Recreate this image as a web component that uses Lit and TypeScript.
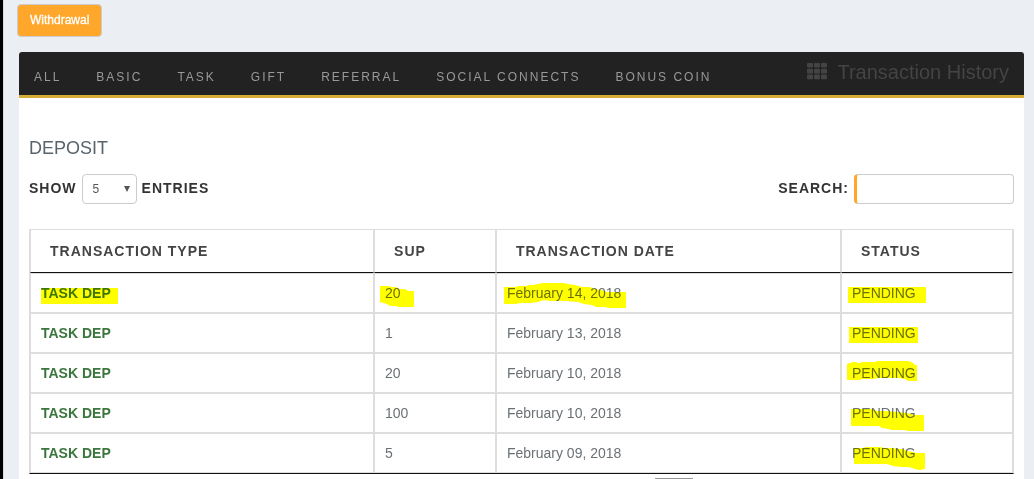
import { LitElement, html, css, nothing } from "lit";
import { customElement } from "lit/decorators.js";

interface Mark {
  type?: string;
  sup?: string;
  date?: string;
  status?: string;
}
interface Row {
  type: string;
  sup: string;
  date: string;
  status: string;
  marks: Mark;
}

// Marker strokes, drawn in the pixel space of a data cell (origin at its top left corner).
const rows: Row[] = [
  {
    type: "TASK DEP", sup: "20", date: "February 14, 2018", status: "PENDING",
    marks: {
      type: "M11 14H88V30H11Z",
      sup: "M6 12H15L17 13H22L25 15H31L34 17H40V33H24L22 32H16L13 30L9 29L6 28Z",
      date: "M8 13H20L22 12H30L33 11H38L41 10L47 9H68L72 10L79 11L86 13H94L98 15L106 16L110 18H130V34H114L108 33H100L96 31L88 30L82 28L70 27H54L48 26L42 28L34 29H24L20 30H8Z",
      status: "M7 13H85V29H7Z",
    },
  },
  { type: "TASK DEP", sup: "1", date: "February 13, 2018", status: "PENDING", marks: { status: "M8 13H77V29H8Z" } },
  { type: "TASK DEP", sup: "20", date: "February 10, 2018", status: "PENDING", marks: { status: "M6 10L8 9H11V8H16V9H20V8H35V7H68L72 9L74 11H76V27H67L64 25L58 24H38L32 25H22L18 26H6Z" } },
  { type: "TASK DEP", sup: "100", date: "February 10, 2018", status: "PENDING", marks: { status: "M10 15H30L36 17H46L56 18L66 19L74 21H83V37H66L64 36H50L48 35L41 34L38 32H10Z" } },
  { type: "TASK DEP", sup: "5", date: "February 09, 2018", status: "PENDING", marks: { status: "M13 14H24V13H40L42 14H53L55 15H62L66 17L72 18L75 19H84V35L78 36L74 35L68 33H60L52 32L46 30H13Z" } },
];

const tabs = ["All", "Basic", "Task", "Gift", "Referral", "Social Connects", "Bonus Coin"];

@customElement("app-root")
export class AppRoot extends LitElement {
  static styles = css`
    :host {
      display: block;
      box-sizing: border-box;
      min-height: 100vh;
      padding: 4px 10px 0 14px;
      border-left: 3px solid #000;
      background: #ebeef3;
      box-shadow: inset 1px 0 #d5d8dc;
      color: #6a7175;
      font: 14px/20px "Liberation Sans", Arial, sans-serif;
    }
    * { box-sizing: border-box; }
    .withdraw {
      display: block;
      height: 33px;
      margin: 0 0 15px;
      padding: 0 12px 2px;
      border: 1px solid #ccc;
      border-radius: 4px;
      background: #ffa72b;
      color: #fff;
      font: 12px/18px "Liberation Sans", Arial, sans-serif;
      -webkit-text-stroke: 0.3px #fff;
    }
    .panel {
      min-height: calc(100vh - 52px);
      margin-left: 2px;
      border-radius: 3px 3px 0 0;
      background: #fff;
    }
    .bar {
      display: flex;
      justify-content: space-between;
      height: 46px;
      padding: 0 15px;
      border-bottom: 3px solid #d4ac33;
      border-radius: 3px 3px 0 0;
      background: #222;
    }
    .tabs {
      display: flex;
      gap: 35px;
      padding-top: 15px;
    }
    .tabs a {
      color: #999;
      font: 12px/20px "Liberation Sans", Arial, sans-serif;
      letter-spacing: 2px;
      text-transform: uppercase;
      text-decoration: none;
      white-space: nowrap;
    }
    .title {
      display: flex;
      gap: 10px;
      margin: 0;
      padding-top: 8px;
      color: #444;
      font-size: 20px;
      font-weight: 400;
      line-height: 24px;
      white-space: nowrap;
    }
    .title svg { margin-top: 3px; }
    .body { padding: 39px 10px 0; }
    h2 {
      margin: 0;
      color: #59636b;
      font-size: 18px;
      font-weight: 400;
      line-height: 22px;
    }
    .tools {
      display: flex;
      justify-content: space-between;
      margin: 15px 0 25px;
    }
    .tools label {
      display: flex;
      gap: 5px;
      color: #333;
      font-weight: 700;
      letter-spacing: 1px;
      line-height: 28px;
    }
    .pick { position: relative; display: flex; }
    select, input {
      height: 30px;
      margin: 0;
      border: 1px solid #ccc;
      border-radius: 4px;
      background: #fff;
      color: #555;
      font: 12px/18px "Liberation Sans", Arial, sans-serif;
    }
    select {
      width: 55px;
      padding: 0 10px;
      appearance: none;
    }
    .pick svg {
      position: absolute;
      top: 12px;
      right: 7px;
      pointer-events: none;
    }
    input {
      width: 160px;
      padding: 0 10px;
      border-left: 3px solid #ffa72b;
    }
    table {
      width: 100%;
      border: 1px solid #ddd;
      border-bottom-color: #111;
      border-collapse: separate;
      border-spacing: 0;
      table-layout: fixed;
    }
    th, td {
      border: 1px solid #ddd;
      text-align: left;
    }
    th {
      height: 43px;
      padding: 0 19px;
      border-top: 0;
      border-bottom-color: #111;
      color: #444;
      letter-spacing: 1px;
      white-space: nowrap;
    }
    td {
      position: relative;
      height: 40px;
      padding: 0 10px;
    }
    .type { width: 35%; }
    .sup { width: 12.4%; }
    .date { width: 35.1%; }
    .status { width: 17.5%; }
    .kind { color: #3c763d; font-weight: 700; }
    .mark {
      position: absolute;
      top: 0;
      left: -1px;
      mix-blend-mode: multiply;
      pointer-events: none;
    }
    .pager {
      width: 38px;
      margin: 4px 321px 0 auto;
      border-top: 1px solid #979797;
    }
  `;

  private cell(text: string, mark?: string, kind = "") {
    return html`<td class=${kind}>${text}${mark
      ? html`<svg class="mark" width="132" height="40" aria-hidden="true"><path d=${mark} fill="#ff0" /></svg>`
      : nothing}</td>`;
  }

  render() {
    return html`
      <button class="withdraw" type="button">Withdrawal</button>
      <section class="panel">
        <header class="bar">
          <nav class="tabs">${tabs.map((t) => html`<a href="#">${t}</a>`)}</nav>
          <h1 class="title">
            <svg width="21" height="17" viewBox="0 0 21 17" fill="#444" aria-hidden="true">
              <rect x="1" y="0" width="6" height="4.6" rx="1" /><rect x="8" y="0" width="6" height="4.6" rx="1" /><rect x="15" y="0" width="6" height="4.6" rx="1" />
              <rect x="1" y="5.8" width="6" height="4.6" rx="1" /><rect x="8" y="5.8" width="6" height="4.6" rx="1" /><rect x="15" y="5.8" width="6" height="4.6" rx="1" />
              <rect x="1" y="11.6" width="6" height="4.6" rx="1" /><rect x="8" y="11.6" width="6" height="4.6" rx="1" /><rect x="15" y="11.6" width="6" height="4.6" rx="1" />
            </svg>
            Transaction History
          </h1>
        </header>
        <div class="body">
          <h2>DEPOSIT</h2>
          <div class="tools">
            <label>SHOW
              <span class="pick">
                <select><option>5</option><option>10</option><option>25</option></select>
                <svg width="6" height="6" aria-hidden="true"><path d="M0 0H6L3 6Z" fill="#555" /></svg>
              </span>
              ENTRIES</label>
            <label>SEARCH: <input type="search" /></label>
          </div>
          <table>
            <thead>
              <tr>
                <th class="type">TRANSACTION TYPE</th>
                <th class="sup">SUP</th>
                <th class="date">TRANSACTION DATE</th>
                <th class="status">STATUS</th>
              </tr>
            </thead>
            <tbody>
              ${rows.map((r) => html`<tr>
                ${this.cell(r.type, r.marks.type, "kind")}
                ${this.cell(r.sup, r.marks.sup)}
                ${this.cell(r.date, r.marks.date)}
                ${this.cell(r.status, r.marks.status)}
              </tr>`)}
            </tbody>
          </table>
          <div class="pager"></div>
        </div>
      </section>
    `;
  }
}
